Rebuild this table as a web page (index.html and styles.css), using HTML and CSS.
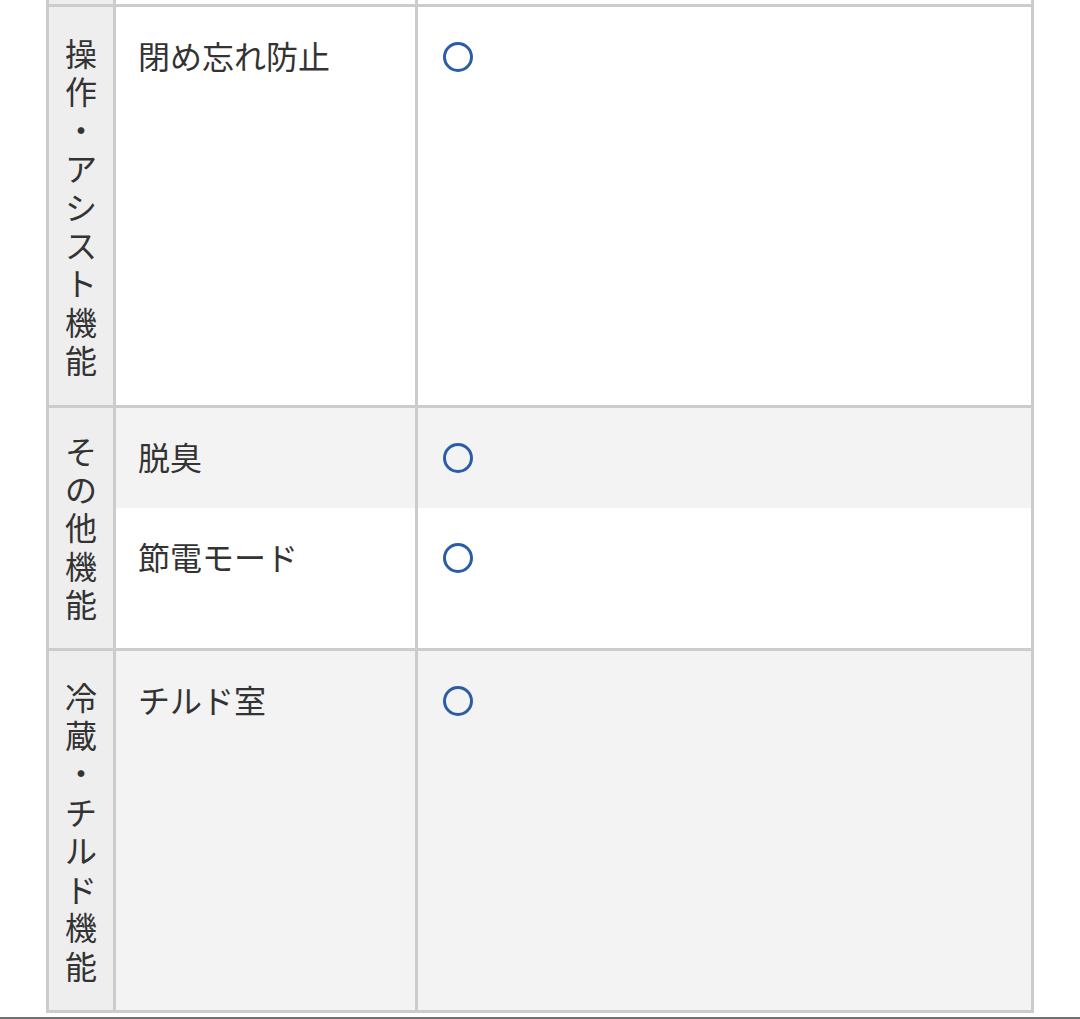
FILE: index.html
```html
<!DOCTYPE html>
<html lang="ja">
<head>
<meta charset="utf-8">
<title>機能一覧</title>
<link rel="stylesheet" href="styles.css">
</head>
<body>
<div class="page">
  <table class="spec">
    <colgroup>
      <col class="c-cat">
      <col class="c-label">
      <col class="c-value">
    </colgroup>
    <tbody>
      <tr class="prev">
        <th class="cat"></th>
        <td class="label"></td>
        <td class="value"></td>
      </tr>
      <tr>
        <th class="cat">操作・アシスト機能</th>
        <td class="label">閉め忘れ防止</td>
        <td class="value"><span class="mark" aria-label="○"></span></td>
      </tr>
      <tr class="shade">
        <th class="cat cat-short" rowspan="2">その他機能</th>
        <td class="label">脱臭</td>
        <td class="value"><span class="mark" aria-label="○"></span></td>
      </tr>
      <tr class="cont">
        <td class="label">節電モード</td>
        <td class="value"><span class="mark" aria-label="○"></span></td>
      </tr>
      <tr class="shade">
        <th class="cat">冷蔵・チルド機能</th>
        <td class="label">チルド室</td>
        <td class="value"><span class="mark" aria-label="○"></span></td>
      </tr>
    </tbody>
  </table>
  <div class="bottom-bar"></div>
</div>
</body>
</html>
```

FILE: styles.css
```css
html, body {
  margin: 0;
  padding: 0;
  background: #ffffff;
}

body {
  font-family: "Noto Sans CJK JP", "Noto Sans", sans-serif;
  color: #333333;
  overflow: hidden;
}

.page {
  width: 1080px;
}

.spec {
  margin-left: 46px;
  width: 985px;
  table-layout: fixed;
  border-collapse: collapse;
  font-size: 32px;
}

.c-cat { width: 67px; }
.c-label { width: 302px; }
.c-value { width: 616px; }

.spec th,
.spec td {
  border: 3px solid #cccccc;
  vertical-align: top;
  text-align: left;
  font-weight: 400;
  background: #ffffff;
}

.spec .cat {
  background: #eeeeee;
  text-align: center;
  padding: 26px 16px;
  line-height: 38.4px;
  line-break: anywhere;
  word-break: break-all;
}

.spec .cat-short {
  padding-top: 23px;
  padding-bottom: 23px;
}

.spec .label {
  padding: 24px 22px 28px;
  line-height: 48px;
}

.spec .value {
  padding: 26px 25px;
  line-height: 48px;
}

.spec .prev th,
.spec .prev td {
  border-top: hidden;
  height: 4px;
  padding: 0;
  line-height: 0;
}

.spec .cont td {
  border-top: hidden;
  padding-bottom: 66px;
}

.spec .shade td {
  background: #f3f3f3;
}

.mark {
  display: inline-block;
  width: 30px;
  height: 30px;
  box-sizing: border-box;
  border: 3px solid #2b5ca6;
  border-radius: 50%;
  vertical-align: middle;
  position: relative;
  top: -5px;
}

.bottom-bar {
  margin-top: 4px;
  border-top: 2px solid #707070;
  height: 10px;
}
```
